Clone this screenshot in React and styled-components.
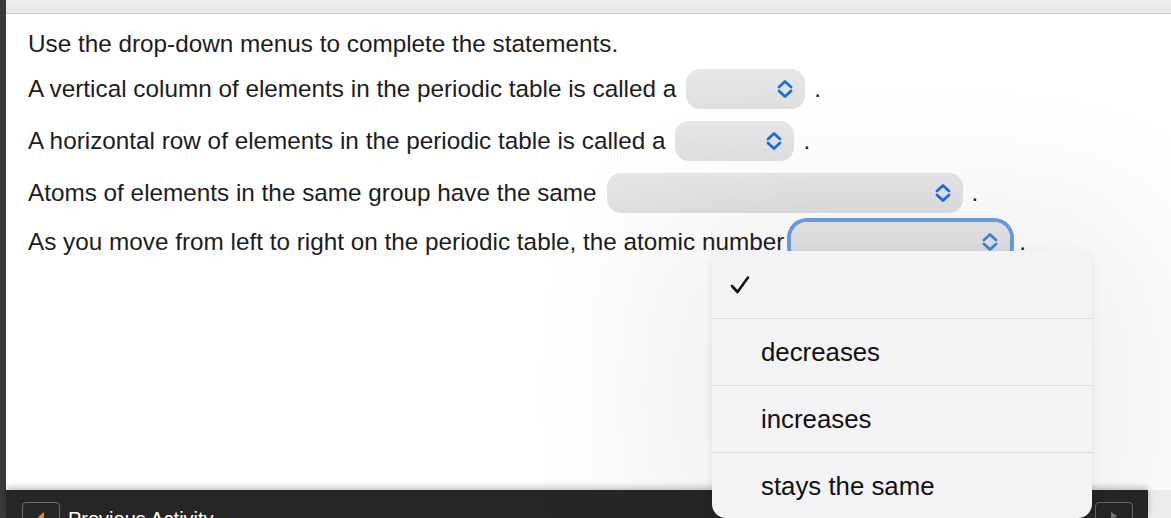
import React from "react";
import styled, { createGlobalStyle } from "styled-components";

const Global = createGlobalStyle`
  html, body { margin: 0; padding: 0; }
  body {
    width: 1171px;
    height: 518px;
    overflow: hidden;
    background: #f1f1f1;
    font-family: "Liberation Sans", Arial, sans-serif;
  }
`;

const Page = styled.div`
  position: relative;
  display: flex;
  width: 1171px;
  height: 518px;
  overflow: hidden;
`;

const LeftStrip = styled.div`
  width: 6px;
  flex: none;
  background: #3a3a3a;
`;

const Main = styled.div`
  flex: 1;
  display: flex;
  flex-direction: column;
  min-width: 0;
`;

const TopBar = styled.div`
  height: 13px;
  flex: none;
  background: linear-gradient(#eeeeee, #e6e6e6);
  border-bottom: 1px solid #c9c9c9;
  box-shadow: 0 1px 2px rgba(0, 0, 0, 0.06);
`;

const Content = styled.div`
  flex: 1;
  background: #ffffff;
  padding: 14px 0 0 22px;
  display: flex;
  flex-direction: column;
  color: #1d1d1d;
  font-size: 24.3px;
  white-space: nowrap;
`;

const Heading = styled.div`
  height: 32px;
  line-height: 32px;
  margin-bottom: 9px;
`;

const Statements = styled.div`
  display: flex;
  flex-direction: column;
  gap: 12px;
`;

const Row = styled.div`
  display: flex;
  align-items: center;
  height: 40px;
  margin-top: ${(p) => (p.$shift ? `${p.$shift}px` : "0")};
`;

const Select = styled.div`
  position: relative;
  flex: none;
  width: ${(p) => p.$w}px;
  height: 40px;
  margin-left: ${(p) => (p.$tight ? 7 : 10)}px;
  border-radius: ${(p) => (p.$focus ? 16 : 14)}px;
  background: linear-gradient(#e7e7ea, #e0e0e3);
  display: flex;
  align-items: center;
  justify-content: flex-end;
  padding-right: 11px;
  box-sizing: border-box;
  box-shadow: ${(p) => (p.$focus ? "0 0 0 4px #6a9fe0" : "none")};
`;

const Dot = styled.span`
  margin-left: 9px;
`;

const BottomBar = styled.div`
  height: 28px;
  flex: none;
  margin-right: 23px;
  background: #262626;
  box-shadow: 0 -3px 6px rgba(0, 0, 0, 0.22);
  display: flex;
  align-items: flex-start;
  justify-content: space-between;
  padding: 12px 15px 0 16px;
  box-sizing: border-box;
  position: relative;
  z-index: 1;
`;

const NavGroup = styled.div`
  display: flex;
  align-items: flex-start;
  gap: 8px;
`;

const NavButton = styled.div`
  width: 38px;
  height: 30px;
  border: 1px solid #6a6a6a;
  border-radius: 4px;
  box-sizing: border-box;
  display: flex;
  justify-content: center;
  padding-top: 8px;
`;

const NavLabel = styled.span`
  color: #ffffff;
  font-size: 20px;
  line-height: 20px;
  margin-top: 7px;
`;

const Popover = styled.div`
  position: absolute;
  left: 712px;
  top: 251px;
  width: 380px;
  height: 267px;
  border-radius: 14px;
  background: #f3f3f5;
  box-shadow: 0 10px 160px 50px rgba(0, 0, 0, 0.07), 0 2px 10px rgba(0, 0, 0, 0.08);
  overflow: hidden;
  z-index: 5;
  font-family: "Liberation Sans", Arial, sans-serif;
`;

const Option = styled.div`
  height: 67px;
  box-sizing: border-box;
  display: flex;
  align-items: center;
  padding-left: ${(p) => (p.$check ? 18 : 49)}px;
  font-size: 25.8px;
  color: #111111;
  border-top: ${(p) => (p.$first ? "none" : "1px solid #dadadc")};
`;

const Chevron = ({ color = "#1c6fdc" }) => (
  <svg width="18" height="20" viewBox="0 0 18 20">
    <path
      d="M3 8 L9 2.5 L15 8 M3 12 L9 17.5 L15 12"
      fill="none"
      stroke={color}
      strokeWidth="2.8"
      strokeLinecap="round"
      strokeLinejoin="round"
    />
  </svg>
);

const Check = () => (
  <svg width="20" height="20" viewBox="0 0 20 20">
    <path
      d="M2 11 L7.5 17 L18 2.5"
      fill="none"
      stroke="#111"
      strokeWidth="2.6"
      strokeLinecap="round"
      strokeLinejoin="round"
    />
  </svg>
);

const rows = [
  { text: "A vertical column of elements in the periodic table is called a", w: 119 },
  { text: "A horizontal row of elements in the periodic table is called a", w: 119 },
  { text: "Atoms of elements in the same group have the same", w: 356 },
  {
    text: "As you move from left to right on the periodic table, the atomic number",
    w: 219,
    focus: true,
  },
];

export default function App() {
  return (
    <>
      <Global />
      <Page>
        <LeftStrip />
        <Main>
          <TopBar />
          <Content>
            <Heading>Use the drop-down menus to complete the statements.</Heading>
            <Statements>
              {rows.map((r, i) => (
                <Row key={i} $shift={r.focus ? -3 : 0}>
                  <span>{r.text}</span>
                  <Select $w={r.w} $focus={r.focus} $tight={r.focus}>
                    <Chevron color={r.focus ? "#3f86e0" : "#1c6fdc"} />
                  </Select>
                  <Dot>.</Dot>
                </Row>
              ))}
            </Statements>
          </Content>
          <BottomBar>
            <NavGroup>
              <NavButton>
                <svg width="10" height="10" viewBox="0 0 10 10">
                  <path d="M8 1 L2 6 L8 9 Z" fill="#e2873a" />
                </svg>
              </NavButton>
              <NavLabel>Previous Activity</NavLabel>
            </NavGroup>
            <NavButton>
              <svg width="10" height="10" viewBox="0 0 10 10">
                <path d="M2 1 L8 5 L2 9 Z" fill="#777" />
              </svg>
            </NavButton>
          </BottomBar>
        </Main>
        <Popover>
          <Option $first $check>
            <Check />
          </Option>
          <Option>decreases</Option>
          <Option>increases</Option>
          <Option>stays the same</Option>
        </Popover>
      </Page>
    </>
  );
}
